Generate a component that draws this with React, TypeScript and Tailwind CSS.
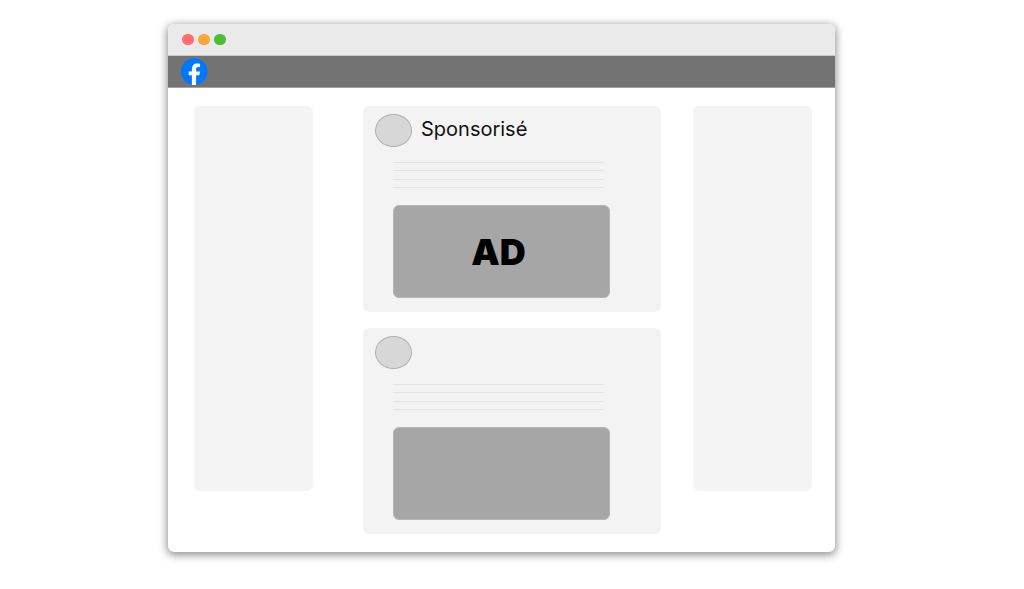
import { clsx } from "clsx";

const WINDOW_DOTS = ["bg-[#ff6d6d]", "bg-[#ffa63a]", "bg-[#4fbc37]"] as const;

const TEXT_LINES = [1, 2, 3, 4] as const;

function FacebookLogo() {
  return (
    <svg
      viewBox="0 0 27 27"
      className="size-[27px]"
      role="img"
      aria-label="Facebook"
    >
      <circle cx="13.2" cy="13.5" r="13.3" fill="#0077ff" />
      <path
        d="M10.9 26.7V17.3H7.7V13.5H10.9V11.2C10.9 7.4 13 5.4 16.3 5.4C17.7 5.4 19.1 5.7 19.1 5.7V9.1H17.3C15.6 9.1 15.1 10 15.1 11.2V13.5H19L18.4 17.3H15.1V26.7C13.8 27 12.2 27 10.9 26.7Z"
        fill="#fff"
      />
    </svg>
  );
}

function SidePanel({ className }: { className?: string }) {
  return (
    <aside
      className={clsx("h-[385px] flex-[119] rounded-md bg-[#f4f4f4]", className)}
    />
  );
}

interface PostProps {
  author?: string;
  media?: string;
}

function Post({ author, media }: PostProps) {
  return (
    <article className="rounded-md bg-[#f3f3f3] pt-2 pb-[14px]">
      <header className="flex h-[33px] gap-[9px] px-3">
        <span className="h-[33px] w-[37px] shrink-0 rounded-[50%] border border-[#b0b0b0] bg-[#d7d7d7]" />
        {author && (
          <h2 className="text-xl leading-[30px] text-[#111]">{author}</h2>
        )}
      </header>

      <div className="mt-[15px] mr-[57px] ml-[30px] flex h-[26px] flex-col justify-between">
        {TEXT_LINES.map((line) => (
          <span key={line} className="h-px bg-[#e3e3e3]" />
        ))}
      </div>

      <div className="mt-[17px] mr-[51px] ml-[30px] flex h-[93px] items-center justify-center rounded-md border border-[#b5b5b5] bg-[#a6a6a6] pr-1.5">
        {media && (
          <span className="text-4xl font-black text-black">{media}</span>
        )}
      </div>
    </article>
  );
}

export default function App() {
  return (
    <div className="min-h-screen bg-white pt-6 pr-[189px] pb-9 pl-[168px] font-[Inter,sans-serif]">
      <div className="overflow-hidden rounded-md bg-white shadow-[0_2px_8px_1px_rgba(0,0,0,0.45)]">
        <div className="flex h-8 items-center gap-1 border-b border-[#c8c8c8] bg-[#eaeaea] px-[14px]">
          {WINDOW_DOTS.map((color) => (
            <span key={color} className={clsx("h-[11px] w-3 rounded-full", color)} />
          ))}
        </div>

        <nav className="flex h-8 items-center border-b border-[#a3a3a3] bg-[#737373] px-[13px]">
          <a href="#">
            <FacebookLogo />
          </a>
        </nav>

        <main className="flex items-start pt-[18px] pr-[23px] pb-[18px] pl-[26px]">
          <SidePanel className="mr-[50px]" />
          <div className="flex flex-[298] flex-col gap-4">
            <Post author="Sponsorisé" media="AD" />
            <Post />
          </div>
          <SidePanel className="ml-8" />
        </main>
      </div>
    </div>
  );
}
